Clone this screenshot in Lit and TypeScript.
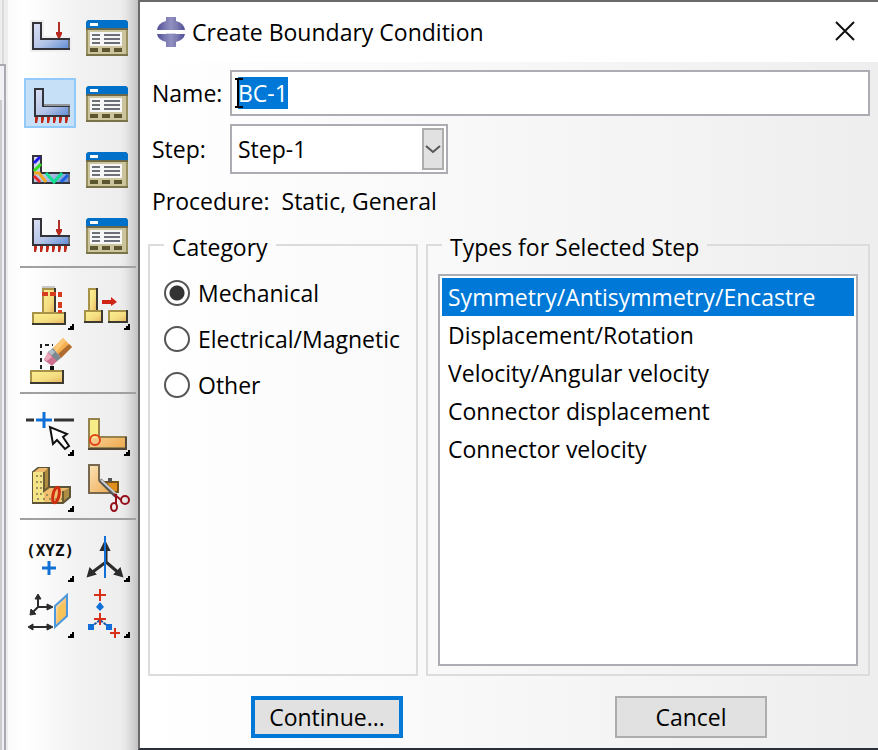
import { LitElement, html, css, svg } from "lit";
import { customElement, property, query, state } from "lit/decorators.js";
import { classMap } from "lit/directives/class-map.js";

const corner = svg`<path d="M50 44V50H44V48H46V46H48V44Z" fill="#000"/>`;

const redArrow = (top: number, tip: number) => svg`
  <path d="M35 ${top}V${tip}" stroke="#b03028" stroke-width="2"/>
  <path d="M32 ${tip - 6}h6v2l-2 4h-2l-2-4z" fill="#b8281c"/>`;

const teeth = (xs: number[], y: number) => xs.map(
  (x) => svg`<path d="M${x} ${y}h3v2l-1 4h-2z" fill="#c02818"/>`);

const bracket = (x: number, y: number, top: number, bottom: number, w = 38) => svg`
  <path d="M${x + 1} ${y + 1}H${x + 9}V${top + 1}H${x + w - 1}V${bottom - 1}H${x + 1}Z"
    fill="url(#steel)" stroke="#33343a" stroke-width="2"/>
  <path d="M${x + w - 1} ${top + 2}V${bottom - 2}" stroke="#6c7078" stroke-width="2"/>`;

const block = (x: number, y: number, w: number, h: number) => svg`
  <rect x=${x} y=${y} width=${w} height=${h} fill="#3c3a30"/>
  <rect x=${x} y=${y} width=${w - 2} height=${h - 2} fill="#a8924a"/>
  <rect x=${x + 2} y=${y + 2} width=${w - 4} height=${h - 4} fill="url(#brass)"/>`;

const plus = (x: number, y: number, r: number, color: string, w = 3) => svg`
  <path d="M${x - r} ${y}H${x + r}M${x} ${y - r}V${y + r}" stroke=${color} stroke-width=${w}/>`;

const defs = svg`<defs>
  <linearGradient id="steel" x1="0" y1="0" x2="1" y2="1">
    <stop offset="0" stop-color="#dcdff4"/><stop offset=".55" stop-color="#b4c4e6"/><stop offset="1" stop-color="#5f8cd6"/>
  </linearGradient>
  <linearGradient id="brass" x1="0" y1="0" x2="1" y2="1">
    <stop offset="0" stop-color="#fbf090"/><stop offset=".6" stop-color="#f4dc80"/><stop offset="1" stop-color="#e8b860"/>
  </linearGradient>
  <linearGradient id="copper" x1="0" y1="0" x2="1" y2="1">
    <stop offset="0" stop-color="#fbe4b8"/><stop offset="1" stop-color="#eea84c"/>
  </linearGradient>
  <linearGradient id="violet" x1="0" x2="1">
    <stop offset="0" stop-color="#504c94"/><stop offset=".5" stop-color="#9c9cc8"/><stop offset="1" stop-color="#504c94"/>
  </linearGradient>
</defs>`;

const icons: Record<string, unknown> = {
  load: svg`<path d="M6 8h14v16h28v16H6z" fill="#efeff0"/>${bracket(8, 10, 26, 38)}${redArrow(10, 26)}`,
  manager: svg`
    <path d="M8 8H46L48 10V44H6V10Z" fill="#98905e"/>
    <path d="M8 8H46L48 10V16H6V10Z" fill="#0070c8"/>
    <rect x="10" y="11" width="8" height="3" fill="#fff"/>
    <rect x="6" y="16" width="42" height="2" fill="#6c6848"/>
    <rect x="8" y="18" width="38" height="24" fill="#ccc49c"/>
    <rect x="10" y="20" width="32" height="14" fill="#f6f6f6"/>
    <path d="M12 23H20M24 23H40M12 27H20M24 27H40M12 31H20M24 31H40" stroke="#6c7076" stroke-width="2"/>
    <path d="M10 38H18M22 38H30M34 38H42" stroke="#5c5630" stroke-width="4"/>
    <rect x="6" y="42" width="42" height="2" fill="#7a7248"/>`,
  boundary: svg`${bracket(10, 10, 27, 39, 36)}
    <path d="M20 27H46" stroke="#94989c" stroke-width="2"/>${teeth([11, 17, 23, 29, 35, 41], 39)}`,
  field: svg`${bracket(8, 11, 28, 40)}
    <g fill="none" stroke-width="3">
      <path d="M10 19L16 13" stroke="#2018e8"/>
      <path d="M10 27L17 20" stroke="#30e020"/>
      <path d="M10 29H15L22 38" stroke="#f0a820"/><path d="M10 32L16 38" stroke="#e82828"/>
      <path d="M22 29L30 38L38 29" stroke="#10e090"/><path d="M37 38L44 31" stroke="#1860e0"/>
    </g>`,
  loadCase: svg`${bracket(8, 8, 25, 36)}${redArrow(10, 25)}${teeth([10, 16, 22, 28, 34, 40], 36)}`,
  partition: svg`
    <path d="M18 7H31" stroke="#c8c8c8" stroke-width="2"/>${block(18, 8, 14, 26)}${block(8, 32, 34, 13)}
    <path d="M18 14H24M26 14H32M36 12V17M36 22V28M36 30V33" stroke="#d83c20" stroke-width="4"/>${corner}`,
  translate: svg`${block(8, 8, 10, 24)}${block(4, 30, 19, 13)}${block(28, 30, 20, 13)}
    <path d="M22 20H31V17L37 22L31 26V24H22Z" fill="#d02414"/>${corner}`,
  eraser: svg`
    <path d="M17 33V9H29" fill="none" stroke="#222" stroke-width="2" stroke-dasharray="4 3"/>
    ${block(6, 34, 34, 14)}
    <path d="M26 30h4v4h-4z" fill="#111"/>
    <path d="M39 2L48 11L37 22L29 12Z" fill="#f4b050"/>
    <path d="M48 11L37 22L34 18L45 8Z" fill="#b06c30"/>
    <path d="M39 2L42 5L32 16L29 12Z" fill="#fcc878"/>
    <path d="M29 12L37 22L32 26L24 16Z" fill="#7c8890"/>
    <path d="M28 13L31 16L27 20L24 16Z" fill="#b4c0c8"/>
    <path d="M24 16L33 25L28 30L20 24Z" fill="#cc7090"/>
    <path d="M24 17L28 21L23 25L20 23Z" fill="#eca8b8"/>`,
  pick: svg`
    <path d="M2 14H10M30 14H50" stroke="#333" stroke-width="3"/>${plus(20, 14, 8, "#1070d8")}
    <path d="M26 21L29 38L33 34L41 43L45 40L39 31L43 28Z" fill="#fff" stroke="#111" stroke-width="2"/>${corner}`,
  edge: svg`
    <path d="M9 13H19V31H46V42H9Z" fill="url(#copper)" stroke="#96824c" stroke-width="2"/>
    <path d="M10 14H18V32H10Z" fill="#f6ec88"/>
    <path d="M8 43H46V31" fill="none" stroke="#544838" stroke-width="2"/>
    <circle cx="15" cy="34" r="5" fill="none" stroke="#e04418" stroke-width="2"/>${corner}`,
  cell: svg`
    <path d="M9 10L14 6H25V25H46V35L39 41H9Z" fill="#b08c40" stroke="#5c5438" stroke-width="2"/>
    <path d="M9 10H20V29H39V40H9Z" fill="#f4e488"/>
    <path d="M20 29H39V40H20Z" fill="#f0c070"/>
    <path d="M10 10L15 6H24L20 10ZM21 29L26 26H45L39 29Z" fill="#f0bc70"/>
    <path d="M13 13V36M17 13V34M22 33H38M13 37H38M43 28V36" stroke="#a0905c" stroke-width="2" stroke-dasharray="2 4"/>
    <path d="M20 10V29L25 25M39 29V40" fill="none" stroke="#6c5c34" stroke-width="2"/>
    <ellipse cx="32" cy="33" rx="3" ry="8" fill="none" stroke="#d02c10" stroke-width="3" transform="rotate(12 32 33)"/>${corner}`,
  cut: svg`
    <path d="M9 3H19V18L33 31H9Z" fill="url(#copper)" stroke="#786850" stroke-width="2"/>
    <path d="M25 20H38V30H33Z" fill="#e09018" stroke="#76521c" stroke-width="2"/>
    <path d="M28 16h4v4h-4z" fill="#555"/>
    <path d="M20 18L36 34" stroke="#555" stroke-width="4"/><path d="M21 18L36 32" stroke="#ccc" stroke-width="2"/>
    <g fill="none" stroke="#96101c" stroke-width="2">
      <path d="M34 32L41 38M36 32L36 42"/><ellipse cx="45" cy="38" rx="4" ry="4"/><ellipse cx="34" cy="45" rx="3" ry="4"/>
    </g>`,
  point: svg`<text class="xyz" x="2" y="24">(XYZ)</text>${plus(25, 36, 7, "#1070d8")}${corner}`,
  csys: svg`
    <path d="M26 30L10 42M26 30L40 42M26 30V14" stroke="#2c2c2c" stroke-width="3"/>
    <path d="M8 44L10 37L15 42ZM42 44L40 37L35 42ZM25 10L29 18H21Z" fill="#2c2c2c" stroke="#2c2c2c" stroke-width="2"/>
    <path d="M25 4V46" stroke="#1070d8" stroke-width="2"/>${corner}`,
  plane: svg`
    <path d="M14 8V19H27M14 19L8 25M6 39H26" fill="none" stroke="#2c2c2c" stroke-width="2"/>
    <path d="M14 6L17 11H11ZM29 19L23 16V22ZM6 27L7 21L12 26ZM4 39L9 36V42ZM29 39L23 36V42Z" fill="#2c2c2c" stroke="#2c2c2c"/>
    <path d="M31 18L43 7V28L31 39Z" fill="url(#copper)" stroke="#4c98dc" stroke-width="2"/>
    <path d="M34 20L41 13V27L34 34Z" fill="#f8c458"/>${corner}`,
  axis: svg`
    ${plus(20, 7, 6, "#d83018", 2)}<path d="M20 14L24 19L20 23L16 19Z" fill="#1070d8"/>
    <path d="M11 39L20 32L29 39" fill="none" stroke="#2458a0" stroke-width="2" stroke-dasharray="3 1"/>
    <path d="M8 36h6v6H8zM26 36h6v6h-6z" fill="#1070d8"/>
    ${plus(20, 31, 6, "#d83018", 2)}${plus(35, 45, 5, "#d83018", 2)}${corner}`,
};

interface Tool { icon: string; label: string; }

const groups: { wide: boolean; tools: Tool[] }[] = [
  { wide: true, tools: [
    { icon: "load", label: "Create Load" }, { icon: "manager", label: "Load Manager" },
    { icon: "boundary", label: "Create Boundary Condition" }, { icon: "manager", label: "Boundary Condition Manager" },
    { icon: "field", label: "Create Predefined Field" }, { icon: "manager", label: "Predefined Field Manager" },
    { icon: "loadCase", label: "Create Load Case" }, { icon: "manager", label: "Load Case Manager" },
  ] },
  { wide: false, tools: [
    { icon: "partition", label: "Partition" }, { icon: "translate", label: "Translate" }, { icon: "eraser", label: "Remove" },
  ] },
  { wide: false, tools: [
    { icon: "pick", label: "Pick Edge" }, { icon: "edge", label: "Partition Face" },
    { icon: "cell", label: "Partition Cell" }, { icon: "cut", label: "Cut" },
  ] },
  { wide: false, tools: [
    { icon: "point", label: "Datum Point" }, { icon: "csys", label: "Datum Coordinate System" },
    { icon: "plane", label: "Datum Plane" }, { icon: "axis", label: "Datum Axis" },
  ] },
];

@customElement("tool-box")
export class ToolBox extends LitElement {
  @property() active = "boundary";

  static styles = css`
    :host { display: block; }
    .group { display: grid; grid-template-columns: 52px 52px; gap: 6px 4px; padding: 12px 0 6px 4px; }
    .wide { row-gap: 16px; }
    .group + .group { border-top: 2px solid #a0a0a0; }
    .tool { box-sizing: border-box; width: 52px; height: 50px; padding: 0; border: 0; background: none; }
    .tool.on { background: #c5e0f7; box-shadow: inset 0 0 0 2px #92cbfa; }
    svg { display: block; }
    .xyz { font: bold 16px "DejaVu Sans Mono", monospace; fill: #111; }
  `;

  render() {
    return groups.map((g) => html`
      <div class=${classMap({ group: true, wide: g.wide })}>
        ${g.tools.map((t) => html`
          <button class=${classMap({ tool: true, on: t.icon === this.active })} aria-label=${t.label}
            @click=${() => { this.active = t.icon; }}>
            <svg width="52" height="50" viewBox="0 0 52 50">${defs}${icons[t.icon]}</svg>
          </button>`)}
      </div>`);
  }
}

@customElement("bc-dialog")
export class BcDialog extends LitElement {
  @state() private category = "Mechanical";
  @query(".name") private nameBox!: HTMLInputElement;

  static styles = css`
    :host {
      display: flex; flex-direction: column; box-sizing: border-box; color: #000;
      border: solid #6a6a6a; border-width: 2px 0 2px 2px; border-bottom-color: #2b2f38;
      background: linear-gradient(90deg, #fff, #f9f9f9 40%, #eee);
      font: 23px/30px "Open Sans", "Noto Sans", sans-serif;
    }
    .title { display: flex; align-items: center; height: 60px; padding: 0 12px 0 16px; background: #fff; }
    .title h1 { flex: 1; margin: 0 0 0 6px; font-size: 23px; font-weight: 400; }
    .close { width: 42px; height: 40px; padding: 0; border: 0; background: none; }
    svg { display: block; }
    form { flex: 1; display: flex; flex-direction: column; padding: 8px 8px 10px; }
    .fields { display: grid; grid-template-columns: 78px 1fr; row-gap: 8px; align-items: center; padding-left: 4px; }
    .edit { position: relative; }
    input, select, button { font: inherit; color: inherit; border-radius: 0; outline: none; }
    .name { display: block; box-sizing: border-box; width: 100%; height: 46px; padding: 0 6px; border: 2px solid #abadb3; background: #fff; }
    .name::selection { background: #0078d7; color: #fff; }
    .beam { position: absolute; left: 5px; top: 8px; }
    .combo { position: relative; width: 218px; }
    .step { display: block; box-sizing: border-box; width: 100%; height: 50px; padding: 0 30px 0 6px; appearance: none; border: 2px solid #abadb3; background: #fff; }
    .drop { position: absolute; right: 4px; top: 4px; box-sizing: border-box; width: 22px; height: 42px; display: grid; place-items: center; border: 2px solid #adadad; background: #e1e1e1; pointer-events: none; }
    .procedure { display: flex; gap: 12px; margin: 12px 0; padding-left: 4px; }
    .panels { flex: 1; display: grid; grid-template-columns: 270px 1fr; gap: 8px; }
    fieldset { display: flex; flex-direction: column; min-width: 0; margin: 0; border: 2px solid #dcdcdc; }
    legend { padding: 4px 8px 0; }
    .category { padding: 8px 14px; }
    .types { padding: 12px 10px 8px; }
    .types legend { margin-left: 4px; }
    .choice { display: flex; align-items: center; gap: 8px; height: 46px; white-space: nowrap; }
    .choice input { flex: none; box-sizing: border-box; appearance: none; width: 26px; height: 26px; margin: 0; border: 2px solid #555; border-radius: 50%; background: #fff; }
    .choice input:checked { background: radial-gradient(circle, #333 7px, #fff 8px); }
    .list { flex: 1; box-sizing: border-box; width: 100%; min-height: 240px; padding: 2px; border: 2px solid #abadb3; background: #fff; overflow: hidden; }
    .list option { box-sizing: border-box; height: 38px; padding: 3px 6px 0; }
    .list option:checked { color: #fff; background: #0078d7 linear-gradient(#0078d7, #0078d7); }
    .actions { display: grid; grid-template-columns: 1fr 1fr; column-gap: 6px; justify-items: center; margin-top: 20px; }
    .action { box-sizing: border-box; width: 152px; height: 42px; padding: 0; border: 2px solid #adadad; background: #e1e1e1; }
    .primary { border: 4px solid #0078d7; }
  `;

  firstUpdated() {
    this.nameBox.focus();
    this.nameBox.select();
  }

  render() {
    return html`
      <header class="title">
        <svg width="30" height="30" viewBox="0 0 30 30">${defs}
          <path d="M10 0H20V4Q28 6 29 13H1Q2 6 10 4Z" fill="url(#violet)"/>
          <path d="M10 30H20V25Q28 23 29 17H1Q2 23 10 25Z" fill="url(#violet)"/>
          <path d="M10 0H20V30H10Z" fill="#7c78b4" opacity=".3"/><path d="M0 13H30V16H0Z" fill="#fff"/>
        </svg>
        <h1>Create Boundary Condition</h1>
        <button class="close" aria-label="Close">
          <svg width="42" height="40" viewBox="0 0 42 40"><path d="M12 10L30 28M30 10L12 28" stroke="#111" stroke-width="2"/></svg>
        </button>
      </header>
      <form @submit=${(e: Event) => e.preventDefault()}>
        <div class="fields">
          <label for="name">Name:</label>
          <div class="edit">
            <input class="name" id="name" value="BC-1" spellcheck="false" autocomplete="off">
            <svg class="beam" width="8" height="30" viewBox="0 0 8 30"><path d="M0 1H8M0 29H8M3 1V29" fill="none" stroke="#000" stroke-width="2"/></svg>
          </div>
          <label for="step">Step:</label>
          <div class="combo">
            <select class="step" id="step"><option>Step-1</option></select>
            <span class="drop"><svg width="18" height="12" viewBox="0 0 18 12"><path d="M2 3L9 9L16 3" fill="none" stroke="#555" stroke-width="2"/></svg></span>
          </div>
        </div>
        <div class="procedure"><span>Procedure:</span><span>Static, General</span></div>
        <div class="panels">
          <fieldset class="category">
            <legend>Category</legend>
            ${["Mechanical", "Electrical/Magnetic", "Other"].map((c) => html`
              <label class="choice"><input type="radio" name="category" .checked=${c === this.category}
                @change=${() => { this.category = c; }}>${c}</label>`)}
          </fieldset>
          <fieldset class="types">
            <legend>Types for Selected Step</legend>
            <select class="list" size="10" aria-label="Types for Selected Step">
              <option selected>Symmetry/Antisymmetry/Encastre</option>
              <option>Displacement/Rotation</option>
              <option>Velocity/Angular velocity</option>
              <option>Connector displacement</option>
              <option>Connector velocity</option>
            </select>
          </fieldset>
        </div>
        <div class="actions">
          <button class="action primary" type="submit">Continue...</button>
          <button class="action" type="button">Cancel</button>
        </div>
      </form>`;
  }
}

@customElement("app-root")
export class AppRoot extends LitElement {
  static styles = css`
    :host { display: grid; grid-template-columns: 8px 130px 1fr; min-height: 100vh; background: #f0f0f0; }
    .edge { display: flex; flex-direction: column; background: #eee; }
    .edge-top { height: 64px; width: 2px; background: #eee; border-right: 2px solid #dadada; margin-left: 2px; box-sizing: border-box; }
    .edge-pane { flex: 1; display: flex; box-sizing: border-box; width: 6px; padding-top: 34px; border: solid #a9a9b1; border-width: 2px 2px 0 0; background: #f0f0f5; }
    .edge-inner { width: 2px; background: #ccc; }
    .tools { padding-left: 12px; background:
      linear-gradient(90deg, transparent 112px, #00000008 118px, #0000002c 130px),
      linear-gradient(90deg, #fafafa, #fff 16px, #f2f2f2 70px, #ececec); }
    .bar { width: 116px; }
  `;

  render() {
    return html`
      <div class="edge"><div class="edge-top"></div><div class="edge-pane"><div class="edge-inner"></div></div></div>
      <nav class="tools" aria-label="Load toolbox"><tool-box class="bar"></tool-box></nav>
      <bc-dialog role="dialog" aria-label="Create Boundary Condition"></bc-dialog>`;
  }
}
